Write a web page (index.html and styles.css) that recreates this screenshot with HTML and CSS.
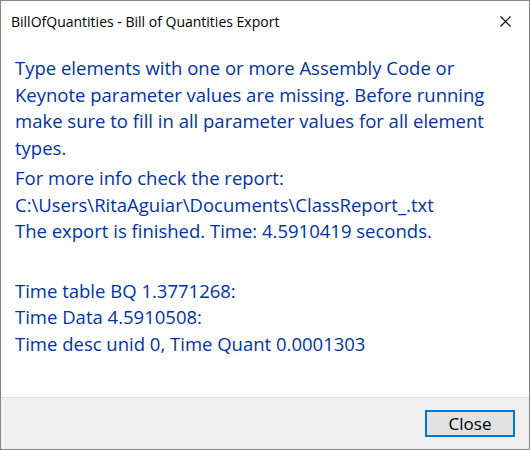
FILE: index.html
```html
<!DOCTYPE html>
<html>
<head>
<meta charset="utf-8">
<link rel="stylesheet" href="styles.css">
</head>
<body>
<div class="dialog">
  <div class="titlebar">
    <span class="title">BillOfQuantities - Bill of Quantities Export</span>
    <svg class="close-x" width="11" height="11" viewBox="0 0 11 11"><path d="M0.5 0.5 L10.5 10.5 M10.5 0.5 L0.5 10.5" stroke="#000" stroke-width="1.1" fill="none"/></svg>
  </div>
  <div class="content">
    <p class="msg first">Type elements with one or more Assembly Code or Keynote parameter values are missing. Before running make sure to fill in all parameter values for all element types.</p>
    <p class="msg second">For more info check the report:<br>C:\Users\RitaAguiar\Documents\ClassReport_.txt<br>The export is finished. Time: 4.5910419 seconds.</p>
    <p class="msg third">Time table BQ 1.3771268:<br>Time Data 4.5910508:<br>Time desc unid 0, Time Quant 0.0001303</p>
  </div>
  <div class="footer">
    <button class="btn">Close</button>
  </div>
</div>
</body>
</html>
```
FILE: styles.css
```css
html, body {
  margin: 0;
  padding: 0;
  background: #ffffff;
}
.dialog {
  width: 530px;
  height: 450px;
  box-sizing: border-box;
  border: 1px solid #858585;
  display: flex;
  flex-direction: column;
  background: #ffffff;
  font-family: "Open Sans", "Noto Sans", sans-serif;
}
.titlebar {
  height: 40px;
  flex: none;
  display: flex;
  align-items: center;
  justify-content: space-between;
  padding: 0 18px 0 10px;
}
.title {
  font-size: 14px;
  color: #000;
}
.close-x {
  display: block;
}
.content {
  flex: 1;
  padding: 14px 18px 0 14px;
}
.msg {
  margin: 0;
  color: #0033a6;
  font-size: 18.5px;
  line-height: 26.5px;
}
.second {
  margin-top: 4px;
}
.third {
  margin-top: 33px;
}
.footer {
  flex: none;
  height: 52px;
  background: #f0f0f0;
  border-top: 1px solid #dfdfdf;
  display: flex;
  justify-content: flex-end;
  align-items: flex-start;
  padding: 12px 14px 0 0;
  box-sizing: border-box;
}
.btn {
  width: 90px;
  height: 27px;
  border: 2px solid #0078d7;
  background: #e1e1e1;
  font-family: "Open Sans", "Noto Sans", sans-serif;
  font-size: 17px;
  color: #000;
  padding: 0;
}
```
